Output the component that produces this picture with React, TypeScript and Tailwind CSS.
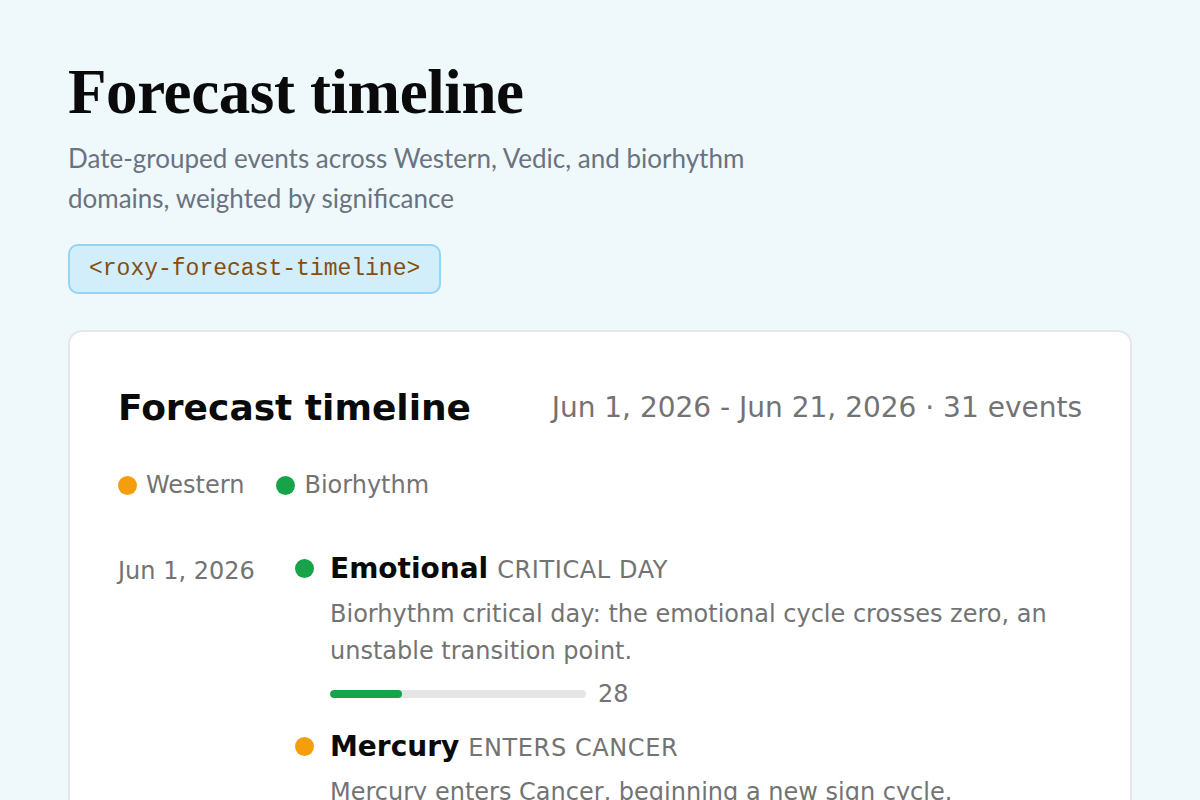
type Domain = 'western' | 'biorhythm'

type ForecastEvent = {
  id: string
  domain: Domain
  subject: string
  kind: string
  description: string
  weight: number
}

type DayGroup = {
  date: string
  events: ForecastEvent[]
}

const dotColor: Record<Domain, string> = {
  western: 'bg-[#f59e0b]',
  biorhythm: 'bg-[#16a34a]',
}

const barColor: Record<Domain, string> = {
  western: 'bg-[#f59e0b]',
  biorhythm: 'bg-[#16a34a]',
}

const days: DayGroup[] = [
  {
    date: 'Jun 1, 2026',
    events: [
      {
        id: 'emo-critical',
        domain: 'biorhythm',
        subject: 'Emotional',
        kind: 'Critical day',
        description:
          'Biorhythm critical day: the emotional cycle crosses zero, an unstable transition point.',
        weight: 28,
      },
      {
        id: 'mercury-cancer',
        domain: 'western',
        subject: 'Mercury',
        kind: 'Enters Cancer',
        description: 'Mercury enters Cancer, beginning a new sign cycle.',
        weight: 54,
      },
    ],
  },
]

function Legend() {
  const items: { domain: Domain; label: string }[] = [
    { domain: 'western', label: 'Western' },
    { domain: 'biorhythm', label: 'Biorhythm' },
  ]
  return (
    <div className="mt-[35px] flex items-center gap-[32px]">
      {items.map((item) => (
        <div key={item.domain} className="flex items-center gap-[9px]">
          <span className={`h-[19px] w-[19px] rounded-full ${dotColor[item.domain]}`} />
          <span className="text-[24px] text-[#737373]">{item.label}</span>
        </div>
      ))}
    </div>
  )
}

function EventRow({ event }: { event: ForecastEvent }) {
  return (
    <div className="flex gap-[16px]">
      <span className={`mt-[8px] h-[19px] w-[19px] shrink-0 rounded-full ${dotColor[event.domain]}`} />
      <div className="flex-1">
        <div className="flex items-baseline gap-[9px] leading-[36px]">
          <span className="text-[28px] font-bold text-[#0a0a0a]">{event.subject}</span>
          <span className="text-[24px] uppercase tracking-[0.6px] text-[#737373]">{event.kind}</span>
        </div>
        <p className="mt-[8px] text-[24px] leading-[37px] text-[#737373]">{event.description}</p>
        <div className="mt-[6px] flex items-center gap-[12px]">
          <div className="h-[8px] w-[256px] overflow-hidden rounded-full bg-[#e5e5e5]">
            <div
              className={`h-full rounded-full ${barColor[event.domain]}`}
              style={{ width: `${event.weight}%` }}
            />
          </div>
          <span className="text-[24px] leading-[36px] text-[#737373]">{event.weight}</span>
        </div>
      </div>
    </div>
  )
}

export default function App() {
  const total = 31

  return (
    <div className="min-h-screen bg-[#eff9fc] px-[68px] pt-[56px] font-['DejaVu_Sans',sans-serif]">
      <h1 className="font-['Liberation_Serif',serif] text-[63px] font-bold leading-[72px] tracking-[-0.4px] text-[#0a0a0a]">
        Forecast timeline
      </h1>
      <p className="mt-[10px] max-w-[760px] font-['Lato',sans-serif] text-[26px] leading-[40px] text-[#6b7280]">
        Date-grouped events across Western, Vedic, and biorhythm domains, weighted by significance
      </p>
      <div className="mt-[26px] inline-flex h-[50px] items-center rounded-[10px] border-2 border-[#93d5f3] bg-[#d2eefa] px-[19px]">
        <code className="font-['Liberation_Mono',monospace] text-[23px] text-[#854d0e]">
          &lt;roxy-forecast-timeline&gt;
        </code>
      </div>

      <section className="mt-[36px] rounded-[14px] border-2 border-[#e5e7eb] bg-white px-[48px] pt-[52px] pb-[40px]">
        <div className="flex items-center justify-between">
          <h2 className="text-[36px] font-bold leading-[48px] text-[#0a0a0a]">Forecast timeline</h2>
          <span className="text-[28px] text-[#737373]">
            Jun 1, 2026 - Jun 21, 2026 · {total} events
          </span>
        </div>

        <Legend />

        <div className="mt-[48px] flex flex-col">
          {days.map((day) => (
            <div key={day.date} className="flex">
              <div className="w-[177px] shrink-0 pt-[2px] text-[24px] leading-[36px] text-[#737373]">
                {day.date}
              </div>
              <div className="flex flex-1 flex-col gap-[17px]">
                {day.events.map((event) => (
                  <EventRow key={event.id} event={event} />
                ))}
              </div>
            </div>
          ))}
        </div>
      </section>
    </div>
  )
}
